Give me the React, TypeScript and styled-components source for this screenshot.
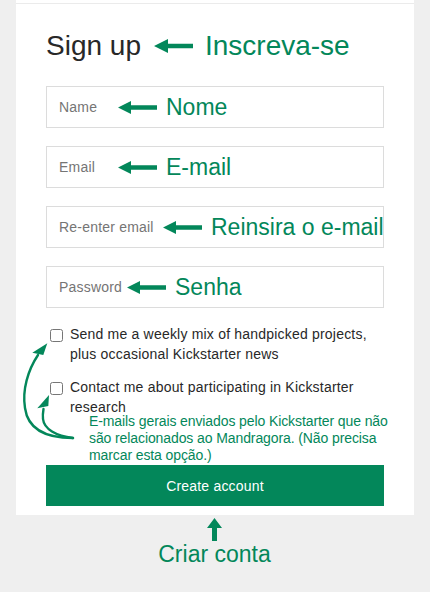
import React from "react";
import styled, { createGlobalStyle } from "styled-components";

const GREEN = "#03875a";

const GlobalStyle = createGlobalStyle`
  html, body { margin: 0; padding: 0; background: #efefef; }
  body { font-family: "Liberation Sans", Arial, sans-serif; }
  * { box-sizing: border-box; }
`;

const Page = styled.div`
  width: 430px;
  height: 592px;
  background: #efefef;
  padding: 0 16px;
  overflow: hidden;
`;

const Card = styled.div`
  background: #ffffff;
  padding-top: 3px;
`;

const TopRule = styled.div`
  height: 1px;
  background: #ebebeb;
`;

const Content = styled.div`
  padding: 26px 30px 9px;
`;

const TitleRow = styled.div`
  display: flex;
  align-items: center;
  height: 32px;
`;

const Title = styled.h1`
  margin: 0;
  font-family: "Liberation Sans", Arial, sans-serif;
  font-size: 28px;
  font-weight: 400;
  line-height: 32px;
  color: #282828;
`;

const Callout = styled.span<{ $size: number }>`
  font-family: "Liberation Sans", Arial, sans-serif;
  font-size: ${(p) => p.$size}px;
  line-height: 1;
  color: ${GREEN};
  white-space: nowrap;
`;

const TitleArrow = styled.svg`
  margin: 0 12px 0 13px;
  flex: none;
`;

const FieldArrow = styled.svg`
  flex: none;
  display: block;
`;

const Form = styled.form`
  margin: 24px 0 0;
  display: flex;
  flex-direction: column;
`;

const Fields = styled.div`
  display: flex;
  flex-direction: column;
  gap: 18px;
`;

const Field = styled.div`
  position: relative;
  height: 42px;
`;

const Input = styled.input`
  width: 100%;
  height: 100%;
  border: 1px solid #dcdcdc;
  border-radius: 0;
  padding: 0 0 0 12px;
  background: #ffffff;
  font-family: "Liberation Sans", Arial, sans-serif;
  font-size: 14px;
  letter-spacing: 0.2px;
  color: #282828;
  outline: none;
  &::placeholder {
    color: #757575;
    opacity: 1;
  }
`;

const FieldNote = styled.div<{ $left: number }>`
  position: absolute;
  top: 0;
  bottom: 0;
  left: ${(p) => p.$left}px;
  display: flex;
  align-items: center;
  gap: 9px;
  pointer-events: none;
`;

const Consent = styled.div`
  position: relative;
  margin-top: 16px;
  display: flex;
  flex-direction: column;
  gap: 13px;
`;

const CheckRow = styled.label`
  display: flex;
  align-items: flex-start;
`;

const Checkbox = styled.input`
  flex: none;
  width: 13px;
  height: 13px;
  margin: 5px 7px 0 4px;
`;

const CheckText = styled.span`
  font-family: "Liberation Sans", Arial, sans-serif;
  font-size: 14px;
  line-height: 20px;
  letter-spacing: 0.2px;
  color: #282828;
`;

const CurvedArrows = styled.svg`
  position: absolute;
  left: -30px;
  top: 0;
  overflow: visible;
  pointer-events: none;
`;

const Note = styled.p`
  margin: -4px 0 0;
  padding-left: 43px;
  font-family: "Liberation Sans", Arial, sans-serif;
  font-size: 14px;
  line-height: 17px;
  letter-spacing: -0.1px;
  color: ${GREEN};
  white-space: nowrap;
`;

const SubmitButton = styled.button`
  margin-top: 1px;
  height: 41px;
  width: 100%;
  border: none;
  border-radius: 0;
  background: ${GREEN};
  color: #ffffff;
  font-family: "Liberation Sans", Arial, sans-serif;
  font-size: 14px;
  letter-spacing: 0.2px;
  cursor: pointer;
`;

const Footer = styled.div`
  display: flex;
  flex-direction: column;
  align-items: center;
  padding-right: 1px;
`;

const UpArrow = styled.svg`
  margin-top: 3px;
  display: block;
`;

const FooterLabel = styled.div`
  font-family: "Liberation Sans", Arial, sans-serif;
  font-size: 23px;
  line-height: 26px;
  color: ${GREEN};
`;

const fields = [
  { placeholder: "Name", type: "text", note: "Nome", left: 72 },
  { placeholder: "Email", type: "email", note: "E-mail", left: 72 },
  { placeholder: "Re-enter email", type: "email", note: "Reinsira o e-mail", left: 117 },
  { placeholder: "Password", type: "password", note: "Senha", left: 81 },
];

export default function App() {
  return (
    <>
      <GlobalStyle />
      <Page>
        <Card>
          <TopRule />
          <Content>
            <TitleRow>
              <Title>Sign up</Title>
              <TitleArrow width="39" height="14" viewBox="0 0 39 14">
                <polygon
                  points="0,7 14,0 14,4.7 39,4.7 39,9.3 14,9.3 14,14"
                  fill={GREEN}
                />
              </TitleArrow>
              <Callout $size={28}>Inscreva-se</Callout>
            </TitleRow>

            <Form onSubmit={(e) => e.preventDefault()}>
              <Fields>
                {fields.map((f) => (
                  <Field key={f.placeholder}>
                    <Input type={f.type} placeholder={f.placeholder} />
                    <FieldNote $left={f.left}>
                      <FieldArrow width="39" height="13" viewBox="0 0 39 13">
                        <polygon
                          points="0,6.5 13,0 13,4.25 39,4.25 39,8.75 13,8.75 13,13"
                          fill={GREEN}
                        />
                      </FieldArrow>
                      <Callout $size={23}>{f.note}</Callout>
                    </FieldNote>
                  </Field>
                ))}
              </Fields>

              <Consent>
                <CheckRow>
                  <Checkbox type="checkbox" />
                  <CheckText>
                    Send me a weekly mix of handpicked projects, plus occasional
                    Kickstarter news
                  </CheckText>
                </CheckRow>
                <CheckRow>
                  <Checkbox type="checkbox" />
                  <CheckText>
                    Contact me about participating in Kickstarter research
                  </CheckText>
                </CheckRow>
                <CurvedArrows width="70" height="120" viewBox="0 0 70 120">
                  <path
                    d="M57,114 C30,114 12,106 9,84 C6,66 12,46 22,31"
                    fill="none"
                    stroke={GREEN}
                    strokeWidth="2.4"
                    strokeLinecap="round"
                  />
                  <polygon points="31.3,19.3 16.3,28.7 27.3,31" fill={GREEN} />
                  <path
                    d="M57,114 C40,112 28,105 27,95 C26.5,91 27,88 27.5,85"
                    fill="none"
                    stroke={GREEN}
                    strokeWidth="2.4"
                    strokeLinecap="round"
                  />
                  <polygon points="33,71 21.3,84.3 32.3,82" fill={GREEN} />
                </CurvedArrows>
              </Consent>

              <Note>
                E-mails gerais enviados pelo Kickstarter que não
                <br />
                são relacionados ao Mandragora. (Não precisa
                <br />
                marcar esta opção.)
              </Note>

              <SubmitButton type="submit">Create account</SubmitButton>
            </Form>
          </Content>
        </Card>

        <Footer>
          <UpArrow width="15" height="23" viewBox="0 0 15 23">
            <polygon points="7.5,0 15,10 10,10 10,23 5,23 5,10 0,10" fill={GREEN} />
          </UpArrow>
          <FooterLabel>Criar conta</FooterLabel>
        </Footer>
      </Page>
    </>
  );
}
